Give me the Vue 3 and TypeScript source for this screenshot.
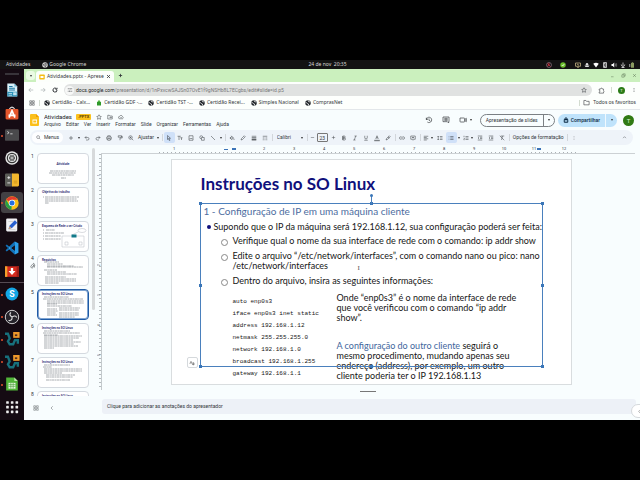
<script setup lang="ts">
import { ref } from 'vue'

interface Tool {
  kind: 'icon' | 'caret' | 'sep'
  icon?: string
  label?: string
  active?: boolean
  slim?: boolean
}

const icons: Record<string, string> = {
  search: 'M15 15l6 6M17 10a7 7 0 1 1-14 0 7 7 0 0 1 14 0z',
  plus: 'M12 4v16M4 12h16',
  minus: 'M4 12h16',
  undo: 'M9 5L4 10l5 5M4 10h11a5 5 0 0 1 0 10H8',
  redo: 'M15 5l5 5-5 5M20 10H9a5 5 0 0 0 0 10h7',
  print: 'M7 8V3h10v5M7 17H3V8h18v9h-4M7 14h10v7H7z',
  paint: 'M5 3h13v6H5zM18 5h3v7h-9v9',
  zoom: 'M15 15l6 6M17 10a7 7 0 1 1-14 0 7 7 0 0 1 14 0zM10 7v6M7 10h6',
  cursor: 'M6 2l12 11h-6l4 8-3 1-4-8-3 4z',
  text: 'M2 5h13M8 5v15M13 11h9M18 11v9',
  image: 'M4 3h16v18H4zM6 17l4-5 3 3 2-2 4 4',
  shape: 'M15 9a6 6 0 1 0-6 6M10 10h11v11H10z',
  line: 'M4 4l16 16',
  fill: 'M9 3l9 9-7 7-7-7 7-7M3 12h14M20 15v5',
  pen: 'M4 20l2-6L17 3l4 4L10 18z',
  weight: 'M3 5h18M3 11h18M3 12h18M3 18h18M3 19h18M3 20h18',
  dash: 'M3 5h18M3 12h7M14 12h7M3 19h4M10 19h4M17 19h4',
  bold: 'M7 4h6a4 4 0 0 1 0 8H7zM7 12h7a4 4 0 0 1 0 8H7zM8 4v16',
  italic: 'M10 4h9M5 20h9M15 4L9 20',
  underline: 'M7 3v8a5 5 0 0 0 10 0V3M5 21h14',
  color: 'M7 16l5-13 5 13M9 11h6M1 21h22M1 23h22',
  marker: 'M4 20l3-7L17 3l4 4-10 10zM12 8l5 5',
  link: 'M10 7H7a5 5 0 0 0 0 10h3M14 7h3a5 5 0 0 1 0 10h-3M8 12h8',
  comment: 'M3 4h18v13h-6l-3 4-3-4H3zM12 7v7M8 10h8',
  align: 'M3 5h18M3 10h12M3 15h18M3 20h12',
  spacing: 'M5 4v16M2 7l3-3 3 3M2 17l3 3 3-3M12 6h10M12 12h10M12 18h10',
  bullets: 'M3 6h2M3 12h2M3 18h2M9 6h13M9 12h13M9 18h13',
  numbers: 'M4 3v6M3 14h3l-3 5h3M10 6h12M10 12h12M10 18h12',
  outdent: 'M3 4h18M12 9h9M12 14h9M3 20h18M8 9l-4 3 4 3',
  indent: 'M3 4h18M12 9h9M12 14h9M3 20h18M4 9l4 3-4 3',
  clear: 'M7 4h14M14 4l-4 16M3 3l18 18',
  more: 'M12 4v2M12 11v2M12 18v2',
  up: 'M5 15l7-7 7 7',
  left: 'M15 5l-7 7 7 7',
  back: 'M21 12H4M11 4l-8 8 8 8',
  forward: 'M3 12h17M13 4l8 8-8 8',
  reload: 'M20 12a8 8 0 1 1-3-6M20 3v6h-6',
  tune: 'M3 7h7M16 7h5M3 17h4M13 17h8M13 4v6M10 14v6',
  star: 'M12 3l3 6 6 1-4 4 1 7-6-3-6 3 1-7-4-4 6-1z',
  move: 'M3 5h6l2 3h10v12H3zM10 14h7M14 11l3 3-3 3',
  cloud: 'M7 19a5 5 0 0 1 0-10 6 6 0 0 1 11 1 5 5 0 0 1 0 9zM9 14l2 2 4-4',
  history: 'M4 12a8 8 0 1 1 3 6M4 5v5h5M12 7v6l4 2',
  chat: 'M3 3h18v14h-1v4l-4-4H3zM7 7h10M7 10h10M7 13h10',
  video: 'M3 6h12a2 2 0 0 1 2 2v8a2 2 0 0 1-2 2H5a2 2 0 0 1-2-2zM17 11l5-4v10l-5-4',
  lock: 'M5 10h14v11H5zM8 10V7a4 4 0 0 1 8 0v3M12 14v3',
  puzzle: 'M4 7h5a3 3 0 0 1 6 0h4v5a3 3 0 0 1 0 5v4H4v-4a3 3 0 0 0 0-6z',
  folder: 'M3 5h7l2 3h9v12H3z',
  grid: 'M3 3h7v7H3zM14 3h7v7h-7zM3 14h7v7H3zM14 14h7v7h-7z',
  clip: 'M9 16l8-9a3 3 0 0 0-5-4L4 12a5 5 0 0 0 8 6l8-9M15 6l3 12',
  min: 'M5 18h12',
  restore: 'M4 9h11v11H4zM9 9V4h11v11h-5',
  close: 'M5 5l14 14M19 5L5 19',
}

const icon = (name: string, label: string, slim = false, active = false): Tool => ({ kind: 'icon', icon: name, label, slim, active })
const caret = (): Tool => ({ kind: 'caret' })
const sep = (): Tool => ({ kind: 'sep' })

const toolsStart: Tool[] = [
  icon('plus', 'Novo slide'), caret(), icon('undo', 'Desfazer'), icon('redo', 'Refazer'),
  icon('print', 'Imprimir'), icon('paint', 'Pintar formatação'), icon('zoom', 'Zoom'),
]
const toolsDraw: Tool[] = [
  sep(), icon('cursor', 'Selecionar', false, true), icon('text', 'Caixa de texto'), icon('image', 'Imagem'),
  icon('shape', 'Forma'), icon('line', 'Linha'), caret(), sep(), icon('fill', 'Cor de preenchimento'),
  icon('pen', 'Cor da borda'), icon('weight', 'Espessura da borda'), icon('dash', 'Traço da borda'), sep(),
]
const toolsText: Tool[] = [
  icon('bold', 'Negrito'), icon('italic', 'Itálico'), icon('underline', 'Sublinhado'), icon('color', 'Cor do texto'),
  icon('marker', 'Cor de destaque'), sep(), icon('link', 'Inserir link'), icon('comment', 'Adicionar comentário'), sep(),
  icon('align', 'Alinhar', true), caret(), icon('spacing', 'Espaçamento'), icon('bullets', 'Lista com marcadores', false, true),
  caret(), icon('numbers', 'Lista numerada', true), caret(), icon('outdent', 'Diminuir recuo'),
  icon('indent', 'Aumentar recuo'), icon('clear', 'Limpar formatação'), sep(),
]

const bookmarks = [
  { text: 'Certidão - Calx...', green: false },
  { text: 'Certidão GDF -...', green: true },
  { text: 'Certidão TST -...', green: false },
  { text: 'Certidão Recei...', green: false },
  { text: 'Simples Nacional', green: false },
  { text: 'ComprasNet', green: false },
]
const menus = ['Arquivo', 'Editar', 'Ver', 'Inserir', 'Formatar', 'Slide', 'Organizar', 'Ferramentas', 'Ajuda']

/* Each bar is [x, y, width] on a 50 by 30 slide. */
interface Thumb { n: number; title: string; center?: boolean; bars: number[][]; diagram?: boolean }
const thumbs: Thumb[] = [
  { n: 1, title: 'Atividade', center: true, bars: [[12, 17, 26], [11, 19, 27], [14, 21, 22], [23, 24, 5]] },
  { n: 2, title: 'Objetivo do trabalho', bars: [[5, 9, 1], [7, 9, 34], [7, 11, 32], [7, 13, 33], [7, 15, 4]] },
  { n: 3, title: 'Esquema de Rede a ser Criado', diagram: true, bars: [[5, 8, 1], [8, 8, 9], [5, 11, 1], [7, 11, 19], [5, 14, 1], [7, 14, 16], [5, 17, 1], [7, 17, 16]] },
  { n: 4, title: 'Requisitos', bars: [[6, 6, 15], [9, 8, 16], [9, 10, 27], [9, 11, 36], [6, 14, 13], [9, 16, 19], [9, 18, 30], [7, 21, 21], [7, 23, 31], [7, 25, 31], [7, 27, 14]] },
  { n: 5, title: 'Instruções no SO Linux', bars: [[6, 7, 25], [5, 9, 40], [9, 11, 37], [9, 13, 37], [9, 14, 10], [9, 16, 25], [9, 19, 10], [9, 21, 11], [9, 23, 9], [9, 25, 10], [21, 18, 21], [21, 20, 20], [21, 23, 20], [21, 25, 20], [21, 27, 16]] },
  { n: 6, title: 'Instruções no SO Linux', bars: [[6, 7, 26], [5, 9, 37], [6, 11, 14], [6, 12, 38], [6, 14, 35], [6, 16, 29], [6, 18, 37], [6, 20, 30], [6, 22, 34], [6, 24, 10]] },
  { n: 7, title: 'Instruções no SO Linux', bars: [[6, 7, 26], [5, 9, 9], [6, 11, 38], [6, 13, 38], [6, 15, 18], [8, 17, 29], [8, 19, 27], [8, 22, 24]] },
  { n: 8, title: 'Instruções no SO Linux', bars: [[6, 7, 26]] },
]

const config = [
  'auto enp0s3', 'iface enp0s3 inet static', 'address 192.168.1.12', 'netmask 255.255.255.0',
  'network 192.168.1.0', 'broadcast 192.168.1.255', 'gateway 192.168.1.1',
]
const rulerX = ['1', '', '', '2', '3', '4', '5', '6', '7', '8', '9', '10', '11', '12']
const rulerY = ['1', '', '1', '2', '3', '4', '5']

const selected = ref(5)
const title = ref('Atividades')
const url = ref('/presentation/d/1nPxvcwSAJSn07OvE1f9gNSHb8L7ECgbs/edit#slide=id.p5')
const font = ref('Calibri')
const size = ref('23')
const notes = ref('')
</script>

<template>
  <div class="screen">
    <header class="topbar">
      <div class="top-left">
        <span>Atividades</span>
        <span class="app-name"><svg class="art" viewBox="0 0 24 24"><circle cx="12" cy="12" r="11" fill="#ddd" /><circle cx="12" cy="12" r="5" fill="#ddd" stroke="#222" stroke-width="2" /><path d="M12 7h10M8 14L3 6M16 14l-4 9" stroke="#222" stroke-width="2" /></svg>Google Chrome</span>
      </div>
      <time>24 de nov&nbsp; 20:35</time>
      <div class="tray">
        <svg class="art tray-a" viewBox="0 0 24 24" fill="none" stroke="#b9a" stroke-width="2"><circle cx="12" cy="12" r="10" /><path d="M6 6l12 12M12 3v9l-7 5" stroke="#d34" stroke-width="3" /></svg>
        <svg class="art tray-b" viewBox="0 0 24 24"><circle cx="12" cy="12" r="11" fill="#6cc02c" /><path d="M7 12l4 4 6-8" stroke="#fff" stroke-width="3" fill="none" /></svg>
        <svg class="art" viewBox="0 0 24 24" fill="none" stroke="#cb8" stroke-width="3"><path d="M2 4h20v13H2zM8 21h8M8 8l8 5" /></svg>
        <svg class="art" viewBox="0 0 24 24" fill="#ddd"><circle cx="12" cy="9" r="5" /><path d="M2 14h20l-4 6H6z" /></svg>
        <svg class="art" viewBox="0 0 24 24" fill="#fff"><path d="M1 7q11-8 22 0L12 22z" /></svg>
        <svg class="art" viewBox="0 0 24 24"><path d="M5 1h14v22H5z" fill="#eee" /><path d="M8 8l8 8-4 4V4l4 4-8 8" stroke="#222" stroke-width="2" fill="none" /></svg>
        <svg class="art" viewBox="0 0 24 24"><path d="M2 8h5l6-6v20l-6-6H2z" fill="#fff" /><path d="M17 7q4 5 0 10M20 4q6 8 0 16" stroke="#aaa" stroke-width="2" fill="none" /></svg>
        <svg class="art" viewBox="0 0 24 24" fill="none" stroke="#eee" stroke-width="3"><path d="M12 2v11M5 10q0 7 7 7t7-7M12 17v6M6 22h12" /></svg>
        <svg class="art" viewBox="0 0 24 24"><path d="M8 4h12v19H8zM11 1h6v3h-6z" fill="#8a9a60" /><path d="M3 8v12" stroke="#ddd" stroke-width="3" /></svg>
      </div>
    </header>

    <div class="desktop">
      <nav class="dock" aria-label="Aplicativos">
        <i class="dock-edge"></i>
        <div class="dock-group pinned">
          <button class="app" aria-label="Writer"><svg viewBox="0 0 24 24"><path d="M4 1h12l5 5v17H4z" fill="#d8f1fa" /><path d="M16 1v5h5z" fill="#6fb6d2" /><path d="M4 15h17v8H4z" fill="#2a90b8" /><path d="M7 9h10M7 12h10M7 6h6" stroke="#1675a0" stroke-width="2" /><path d="M6 18h6M6 21h6" stroke="#fff" stroke-width="1" /><path d="M14 16h6v5h-6z" fill="#bfe3ef" /></svg></button>
          <button class="app" aria-label="Software"><svg viewBox="0 0 24 24"><path d="M7 6q5-8 10 0" fill="none" stroke="#ddd" stroke-width="2" /><rect x="1" y="5" width="22" height="18" rx="2" fill="#e4562c" /><path d="M7 20l5-12 5 12M6 16h12" fill="none" stroke="#fff" stroke-width="3" /></svg></button>
          <button class="app run" aria-label="Terminal"><svg viewBox="0 0 24 24"><rect x="0" y="2" width="24" height="20" rx="2" fill="#4a4a4c" /><path d="M4 6l3 2-3 2M9 10h4" fill="none" stroke="#ddd" stroke-width="1.5" /></svg></button>
          <button class="app" aria-label="Configurações"><svg viewBox="0 0 24 24"><circle cx="12" cy="12" r="11.500" fill="#e4e4e4" /><circle cx="12" cy="12" r="8" fill="none" stroke="#333" stroke-width="2" /><circle cx="12" cy="12" r="5" fill="#444" /><path d="M12 6v12M7 9l10 6M7 15l10-6" stroke="#eee" stroke-width="1" /></svg></button>
          <button class="app" aria-label="Calculadora"><svg viewBox="0 0 24 24"><rect x="0" y="1" width="14" height="22" rx="2" fill="#5c5d58" /><path d="M12 1h10q2 0 2 2v18q0 2-2 2H12z" fill="#f3b72e" /><path d="M4 8h5M6.500 5.500v5M4 17h5" stroke="#eee" stroke-width="1.500" /><path d="M15 14h6M15 17h6" stroke="#bb8510" stroke-width="1" /></svg></button>
          <button class="app run current" aria-label="Google Chrome"><svg viewBox="0 0 24 24"><circle cx="12" cy="12" r="11.500" fill="#fbc116" /><path d="M12 12L2 6.500A11.500 11.500 0 0 1 22 6.500H12z" fill="#e33b2e" /><path d="M12 12l-1 11.500A11.500 11.500 0 0 1 2 6.500L7 15z" fill="#25a148" /><circle cx="12" cy="12" r="5.500" fill="#fff" /><circle cx="12" cy="12" r="4.300" fill="#2470e0" /></svg></button>
          <button class="app" aria-label="Editor de texto"><svg viewBox="0 0 24 24"><rect x="2" y="1" width="19" height="22" rx="2" fill="#f1f1f4" /><path d="M6 6h9M6 20h12" stroke="#bbb" stroke-width="1" /><path d="M6 19l2-6 9-9 4 4-9 9z" fill="#2860d0" /><path d="M6 19l2-5 3 3z" fill="#e9a860" /></svg></button>
          <button class="app" aria-label="Visual Studio Code"><svg viewBox="0 0 24 24"><path d="M17 1l6 3v16l-6 3L5 12z" fill="#2b9fe8" /><path d="M17 7v10l-7-5z" fill="#16101a" /><path d="M1 8l2-2 14 12v5zM1 16l2 2L17 7V1z" fill="#1272b9" /></svg></button>
          <button class="app" aria-label="Downloads"><svg viewBox="0 0 24 24"><path d="M0 4h24v18H0z" fill="#d52b1e" /><path d="M0 4h4v18H0z" fill="#f4a12c" /><path d="M20 4h4v18h-4z" fill="#9c1d16" /><path d="M10 7h4v5h4l-6 7-6-7h4z" fill="#fff" /></svg></button>
        </div>
        <div class="dock-group running">
          <button class="app run" aria-label="Skype"><svg viewBox="0 0 24 24"><circle cx="12" cy="12" r="11" fill="#14a5e4" /><text x="12" y="17" class="skype">S</text></svg></button>
          <button class="app run" aria-label="OBS Studio"><svg viewBox="0 0 24 24"><circle cx="12" cy="12" r="11.500" fill="#25232a" stroke="#e8e8e8" stroke-width="1.500" /><path d="M12 12q-6-3-2-8M12 12q6-4 8 1M12 12q1 7-6 6" fill="none" stroke="#ddd" stroke-width="2" /></svg></button>
          <button v-for="n in 2" :key="n" class="app run" :aria-label="'Máquina virtual ' + n"><svg viewBox="0 0 24 24"><path d="M0 3h5l3 8-3 5 3 5h6l3-7h5v6" fill="none" stroke="#17707c" stroke-width="4" /><rect x="14" y="0" width="11" height="10" fill="#ed982b" /><path d="M17 4h4v3h-4z" fill="#4d2d20" /></svg></button>
          <button class="app run" aria-label="Calc"><svg viewBox="0 0 24 24"><path d="M2 1h14l6 6v16H2z" fill="#51b438" /><path d="M16 1v6h6z" fill="#bfe7b0" /><path d="M6 10h12v10H6z" fill="#e9f8e3" /><path d="M6 13h12M6 16h12M10 10v10M14 10v10" stroke="#3e9a2c" stroke-width="1" /></svg></button>
          <button class="app" aria-label="Mostrar aplicativos"><svg viewBox="0 0 24 24" fill="#eee"><rect v-for="n in 9" :key="n" :x="2 + ((n - 1) % 3) * 8" :y="2 + Math.floor((n - 1) / 3) * 8" width="4.500" height="4.500" rx="1" /></svg></button>
        </div>
      </nav>

      <main class="browser">
        <div class="tabs">
          <button class="tab-search" aria-label="Pesquisar guias"><i class="caret"></i></button>
          <div class="tab">
            <svg class="art" viewBox="0 0 24 24"><rect x="1" y="2" width="22" height="20" rx="3" fill="#f5bc14" /><path d="M6 8h12v8H6z" fill="#fff" /></svg>
            <span class="tab-title">Atividades.pptx - Aprese</span>
            <button class="ib" aria-label="Fechar guia"><svg class="i5 bold" viewBox="0 0 24 24"><path :d="icons.close" /></svg></button>
          </div>
          <button class="ib new-tab" aria-label="Nova guia"><svg class="i5 bold" viewBox="0 0 24 24"><path :d="icons.plus" /></svg></button>
          <div class="win">
            <button v-for="w in ['min', 'restore', 'close']" :key="w" class="ib" :aria-label="w"><svg class="i5" viewBox="0 0 24 24"><path :d="icons[w]" /></svg></button>
          </div>
        </div>

        <div class="address">
          <button class="ib faded" aria-label="Voltar"><svg class="i6" viewBox="0 0 24 24"><path :d="icons.back" /></svg></button>
          <button class="ib faded" aria-label="Avançar"><svg class="i6" viewBox="0 0 24 24"><path :d="icons.forward" /></svg></button>
          <button class="ib" aria-label="Recarregar"><svg class="i6 bold" viewBox="0 0 24 24"><path :d="icons.reload" /></svg></button>
          <div class="omnibox">
            <span class="site"><svg class="i6" viewBox="0 0 24 24"><path :d="icons.tune" /></svg></span>
            <label for="url">docs.google.com</label>
            <input id="url" v-model="url" />
            <button class="ib" aria-label="Favoritar"><svg class="i6" viewBox="0 0 24 24"><path :d="icons.star" /></svg></button>
          </div>
          <button class="ib" aria-label="Extensões"><svg class="i7" viewBox="0 0 24 24"><path :d="icons.puzzle" /></svg></button>
          <i class="rule"></i>
          <button class="profile" aria-label="Perfil">T</button>
          <button class="ib" aria-label="Menu"><svg class="i6 bold" viewBox="0 0 24 24"><path :d="icons.more" /></svg></button>
        </div>

        <div class="bookmarks">
          <button class="ib" aria-label="Grupos de guias"><svg class="i6" viewBox="0 0 24 24"><path :d="icons.grid" /></svg></button>
          <i class="rule"></i>
          <a v-for="b in bookmarks" :key="b.text" href="#">
            <svg v-if="b.green" class="art" viewBox="0 0 24 24"><path d="M4 7h16v15H4z" fill="#2f9a2a" /><path d="M8 2h8v6H8z" fill="#4fb53e" /></svg>
            <svg v-else class="art" viewBox="0 0 24 24"><circle cx="12" cy="12" r="11" fill="#22262b" /><path d="M2 11q7-1 8 3t4 2v6M13 2q-2 6 8 6" stroke="#fff" stroke-width="3" fill="none" /></svg>{{ b.text }}
          </a>
          <a class="all" href="#"><i class="rule"></i><svg class="i7" viewBox="0 0 24 24"><path :d="icons.folder" /></svg>Todos os favoritos</a>
        </div>

        <div class="doc-head">
          <svg class="logo" viewBox="0 0 18 24"><path d="M2 0h10l6 6v16q0 2-2 2H2q-2 0-2-2V2q0-2 2-2z" fill="#fbc01b" /><path d="M12 0v6h6z" fill="#f09d00" /><path d="M5 11h9v8H5z" fill="#fff" /><path d="M6.500 13h6v4h-6z" fill="#fbc01b" /></svg>
          <div class="doc-info">
            <div class="doc-title">
              <input v-model="title" aria-label="Título" />
              <span class="badge">.PPTX</span>
              <button v-for="[n, l] in [['star', 'Com estrela'], ['move', 'Mover'], ['cloud', 'Status']]" :key="n" class="ib" :aria-label="l"><svg class="i6" viewBox="0 0 24 24"><path :d="icons[n]" /></svg></button>
            </div>
            <div class="menus"><button v-for="m in menus" :key="m">{{ m }}</button></div>
          </div>
          <div class="doc-actions">
            <button class="ib" aria-label="Histórico"><svg class="i8" viewBox="0 0 24 24"><path :d="icons.history" /></svg></button>
            <button class="ib" aria-label="Comentários"><svg class="i8" viewBox="0 0 24 24"><path :d="icons.chat" /></svg></button>
            <button class="ib meet" aria-label="Reunião"><svg class="i8" viewBox="0 0 24 24"><path :d="icons.video" /></svg><i class="caret"></i></button>
            <div class="present"><button>Apresentação de slides</button><button class="drop" aria-label="Opções de apresentação"><i class="caret"></i></button></div>
            <div class="share"><button><svg class="i6 bold" viewBox="0 0 24 24"><path :d="icons.lock" /></svg>Compartilhar</button><button class="drop" aria-label="Opções de compartilhamento"><i class="caret"></i></button></div>
            <button class="avatar" aria-label="Conta">T</button>
          </div>
        </div>

        <div class="toolbar">
          <button class="menu-search"><svg class="i5" viewBox="0 0 24 24"><path :d="icons.search" /></svg>Menus</button>
          <template v-for="(t, k) in toolsStart" :key="'a' + k">
            <i v-if="t.kind === 'caret'" class="cell-caret"><i class="caret"></i></i>
            <button v-else class="cell" :aria-label="t.label"><svg class="i6" viewBox="0 0 24 24"><path :d="icons[t.icon!]" /></svg></button>
          </template>
          <button class="fit">Ajustar<i class="caret"></i></button>
          <template v-for="(t, k) in toolsDraw" :key="'b' + k">
            <i v-if="t.kind === 'sep'" class="cell-sep"></i>
            <i v-else-if="t.kind === 'caret'" class="cell-caret"><i class="caret"></i></i>
            <button v-else class="cell" :class="{ active: t.active }" :aria-label="t.label"><svg class="i6" viewBox="0 0 24 24"><path :d="icons[t.icon!]" /></svg></button>
          </template>
          <div class="font"><select v-model="font" aria-label="Fonte"><option>Calibri</option></select><i class="caret"></i></div>
          <i class="cell-sep"></i>
          <button class="cell slim" aria-label="Diminuir fonte"><svg class="i5" viewBox="0 0 24 24"><path :d="icons.minus" /></svg></button>
          <input v-model="size" class="size" aria-label="Tamanho da fonte" />
          <button class="cell" aria-label="Aumentar fonte"><svg class="i5" viewBox="0 0 24 24"><path :d="icons.plus" /></svg></button>
          <template v-for="(t, k) in toolsText" :key="'c' + k">
            <i v-if="t.kind === 'sep'" class="cell-sep"></i>
            <i v-else-if="t.kind === 'caret'" class="cell-caret"><i class="caret"></i></i>
            <button v-else class="cell" :class="{ active: t.active, slim: t.slim }" :aria-label="t.label"><svg class="i6" viewBox="0 0 24 24"><path :d="icons[t.icon!]" /></svg></button>
          </template>
          <button class="format">Opções de formatação</button>
          <i class="cell-sep"></i>
          <button class="cell" aria-label="Mais"><svg class="i6" viewBox="0 0 24 24"><path :d="icons.more" /></svg></button>
          <button class="cell collapse" aria-label="Ocultar menus"><svg class="i5" viewBox="0 0 24 24"><path :d="icons.up" /></svg></button>
        </div>

        <div class="workspace">
          <aside class="side">
            <div class="film">
              <ol>
                <li v-for="t in thumbs" :key="t.n">
                  <span class="num">{{ t.n }}<svg v-if="t.n === 4" class="i6" viewBox="0 0 24 24"><path :d="icons.clip" /></svg></span>
                  <button class="thumb" :class="{ selected: t.n === selected }" :aria-label="'Slide ' + t.n" @click="selected = t.n">
                    <svg viewBox="0 0 50 30">
                      <text :x="t.center ? 25 : 4" :y="t.center ? 11 : 5" :class="['thumb-title', { center: t.center }]">{{ t.title }}</text>
                      <path v-for="(b, k) in t.bars" :key="k" class="bar" :d="`M${b[0]} ${b[1]}h${b[2]}`" />
                      <g v-if="t.diagram" fill="#fff" stroke="#b5b8c0" stroke-width="0.500">
                        <path d="M24 14h22v11H24zM34 13l8-4" /><ellipse cx="44" cy="8.500" rx="4" ry="2" />
                        <rect x="33.500" y="12.500" width="5" height="3" fill="#127a8a" stroke="none" />
                        <path d="M27 20h3v3h-3zM41 20h3v3h-3z" />
                      </g>
                    </svg>
                  </button>
                </li>
              </ol>
              <i class="scroll"></i>
            </div>
            <div class="side-foot">
              <button class="ib" aria-label="Visualização em grade"><svg class="i6" viewBox="0 0 24 24"><path :d="icons.grid" /></svg></button>
              <button class="ib" aria-label="Ocultar miniaturas"><svg class="i6" viewBox="0 0 24 24"><path :d="icons.left" /></svg></button>
            </div>
          </aside>

          <section class="stage">
            <div class="ruler-x">
              <div class="scale-x"><span v-for="(r, k) in rulerX" :key="k">{{ r }}<i v-if="k === 2" class="markers"><b></b><b class="down"></b></i><i v-if="k === 12" class="markers end"><b class="down"></b></i></span></div>
            </div>
            <div class="stage-body">
              <div class="ruler-y"><span v-for="(r, k) in rulerY" :key="k">{{ r }}</span></div>
              <div class="canvas">
                <article class="slide">
                  <h1>Instruções no SO Linux</h1>
                  <div class="body-box">
                    <h2>1 - Configuração de IP em uma máquina cliente</h2>
                    <p class="lead">Supondo que o IP da máquina será 192.168.1.12, sua configuração poderá ser feita:</p>
                    <ul>
                      <li>Verifique qual o nome da sua interface de rede com o comando: ip addr show</li>
                      <li>Edite o arquivo “/etc/network/interfaces”, com o comando nano ou pico: nano<br>/etc/network/interfaces</li>
                      <li>Dentro do arquivo, insira as seguintes informações:</li>
                    </ul>
                    <div class="columns">
                      <div class="code"><code v-for="c in config" :key="c">{{ c }}</code></div>
                      <div class="aside-text">
                        <p>Onde “enp0s3” é o nome da interface de rede<br>que você verificou com o comando “ip addr<br>show”.</p>
                        <p><em>A configuração do outro cliente</em> seguirá o<br>mesmo procedimento, mudando apenas seu<br>endereço (address), por exemplo, um outro<br>cliente poderia ter o IP 192.168.1.13</p>
                      </div>
                    </div>
                    <div class="selection">
                      <i class="h nw"></i><i class="h n"></i><i class="h ne"></i><i class="h w"></i><i class="h e"></i>
                      <i class="h sw"></i><i class="h s"></i><i class="h se"></i><i class="stem"></i><i class="h rot"></i>
                    </div>
                    <span class="pointer">I</span>
                  </div>
                  <button class="autofit" aria-label="Ajuste automático"><svg class="i6" viewBox="0 0 24 24"><path d="M3 15L8 5l5 10M5 12h6M13 17h8M14 11q6-3 6 2v6q-6 2-6-2t6-2" /></svg></button>
                </article>
              </div>
            </div>
            <div class="grip"></div>
            <div class="notes">
              <textarea v-model="notes" rows="1" placeholder="Clique para adicionar as anotações do apresentador" aria-label="Anotações do apresentador"></textarea>
              <button class="side-toggle" aria-label="Mostrar painel lateral"><svg class="i5" viewBox="0 0 24 24"><path :d="icons.left" /></svg></button>
            </div>
          </section>
        </div>
      </main>
    </div>
  </div>
</template>

<style>
body { margin: 0; background: #000; }
</style>

<style scoped>
* { box-sizing: border-box; }
.screen { min-height: 100vh; padding: 60px 0; background: #000; display: flex; flex-direction: column; font-family: Roboto, "Liberation Sans", sans-serif; font-size: 5px; line-height: 7px; color: #33363a; overflow: hidden; }
button, input, select, textarea { font: inherit; color: inherit; background: none; border: 0; padding: 0; margin: 0; outline: 0; }
button { display: flex; align-items: center; justify-content: center; white-space: nowrap; cursor: pointer; }
a { color: inherit; text-decoration: none; }
svg { display: block; flex: none; overflow: visible; }
.art { width: 6px; height: 6px; }
.i5, .i6, .i7, .i8 { fill: none; stroke: currentColor; stroke-width: 2; }
.i5 { width: 5px; height: 5px; }
.i6 { width: 6px; height: 6px; }
.i7 { width: 7px; height: 7px; }
.i8 { width: 8px; height: 8px; }
.bold { stroke-width: 4; }
.caret { display: block; width: 0; border: 1px solid transparent; border-top: 2px solid #333; border-bottom: 0; }
.ib { flex: none; }

.topbar { display: grid; grid-template-columns: 1fr auto 1fr; align-items: center; height: 9px; padding: 0 5px 0 6px; background: #131313; color: #d8d8d8; font-family: "Noto Sans", sans-serif; }
.top-left { display: flex; gap: 12px; }
.app-name { display: flex; align-items: center; gap: 1px; }
.tray { display: flex; justify-content: flex-end; gap: 3px; }
.tray-a { margin-right: 5px; }
.tray-b { margin-right: 6px; }
time { padding-left: 14px; }

.desktop { flex: 1; display: flex; min-height: 351px; }
.dock { flex: none; width: 24px; display: flex; flex-direction: column; align-items: stretch; background: #150b13; }
.dock-edge { height: 2px; width: 14px; margin: 4px auto 4px; background: #38343a; }
.dock-group { display: flex; flex-direction: column; justify-content: space-around; align-items: center; }
.pinned { flex: 9; border-bottom: 1px solid #554b53; }
.running { flex: 6; padding-bottom: 2px; }
.app { position: relative; width: 22px; height: 21px; border-radius: 3px; }
.app svg { width: 14px; height: 14px; }
.app.current { background: #434044; }
.app.run::before { content: ""; position: absolute; left: 0; top: 10px; width: 2px; height: 2px; border-radius: 1px; background: #e4502c; }
.skype { font: bold 15px Roboto, sans-serif; fill: #fff; text-anchor: middle; }

.browser { flex: 1; min-width: 0; display: flex; flex-direction: column; background: #f8fdfe; }
.tabs { display: flex; align-items: center; height: 13px; padding: 0 3px 0 2px; background: #cbf0be; font-family: "Noto Sans", sans-serif; }
.tab-search { width: 9px; height: 9px; border-radius: 3px; background: #eafbe4; }
.tab { display: flex; align-items: center; gap: 2px; align-self: flex-end; height: 11px; width: 78px; margin-left: 1px; padding: 0 3px; border-radius: 3px 3px 0 0; background: #fcfffb; }
.tab-title { flex: 1; white-space: nowrap; }
.new-tab { margin-left: 4px; }
.win { margin-left: auto; display: flex; gap: 6px; color: #4b6144; }
.address { display: flex; align-items: center; gap: 6px; height: 16px; padding: 0 3px 0 4px; background: #fdfffd; }
.faded { color: #8b9095; }
.omnibox { flex: 1; display: flex; align-items: center; height: 12px; padding: 0 5px 0 1px; border-radius: 6px; background: #e0e2e1; }
.site { display: grid; place-items: center; width: 9px; height: 9px; border-radius: 5px; background: #f7f8f7; margin-right: 2px; }
.omnibox label { color: #222; }
.omnibox input { flex: 1; min-width: 0; color: #777; }
.profile { width: 7px; height: 7px; border-radius: 4px; background: #2a7b16; color: #fff; font-size: 4px; }
.rule { flex: none; width: 1px; height: 6px; background: #d3dcd0; }
.bookmarks { display: flex; align-items: center; gap: 4px; height: 12px; padding: 0 4px 2px 5px; background: #fdfffd; border-bottom: 1px solid #e3e7ea; font-family: "Noto Sans", sans-serif; white-space: nowrap; }
.bookmarks a { display: flex; align-items: center; gap: 2px; margin-right: 2px; }
.bookmarks a.all { margin: 0 0 0 auto; gap: 3px; }

.doc-head { display: flex; align-items: center; height: 20px; padding: 0 6px 0 6px; }
.logo { width: 9px; height: 12px; }
.doc-info { margin-left: 5px; display: flex; flex-direction: column; }
.doc-title { display: flex; align-items: center; gap: 5px; height: 8px; }
.doc-title input { width: 28px; height: 8px; font-size: 6px; color: #202124; }
.badge { margin-left: -1px; padding: 0 2px; height: 6px; line-height: 6px; border-radius: 1px; background: #fbc21e; font-size: 4px; font-weight: bold; color: #5c4300; }
.menus { display: flex; gap: 5px; }
.doc-actions { margin-left: auto; display: flex; align-items: center; }
.doc-actions > .ib { margin-right: 9px; }
.meet { gap: 3px; }
.doc-actions > .meet { margin-right: 8px; }
.present, .share { display: flex; align-items: stretch; height: 13px; border-radius: 7px; }
.present { border: 1px solid #7b8084; margin-right: 3px; }
.present button { padding: 0 5px; }
.present .drop { width: 11px; padding: 0; border-left: 1px solid #7b8084; }
.share { background: #bfe3fb; color: #0b2a44; font-weight: 500; margin-right: 6px; }
.share button { gap: 2px; padding: 0 5px; }
.share .drop { width: 12px; padding: 0; border-left: 1px solid #f0f9fe; }
.avatar { width: 11px; height: 11px; border-radius: 6px; background: #2f7a14; color: #d7f0cc; font-size: 6px; }

.toolbar { display: flex; align-items: center; height: 15px; margin: 0 7px 0 6px; padding: 0 3px 0 2px; border-radius: 8px; background: #eef3f9; }
.menu-search { width: 31px; height: 11px; margin-right: 2px; border-radius: 6px; background: #fdfeff; gap: 3px; }
.cell { flex: none; width: 11px; height: 11px; border-radius: 2px; }
.cell.slim { width: 8px; }
.cell.active { background: #cfe0f8; }
.cell-caret { flex: none; display: grid; place-items: center; width: 5px; }
.cell-sep { flex: none; width: 1px; height: 7px; margin: 0 1px; background: #d2d6db; }
.fit { gap: 3px; padding: 0 2px; }
.font { flex: none; display: flex; align-items: center; width: 32px; padding: 0 3px; }
.font select { flex: 1; appearance: none; }
.size { flex: none; width: 11px; height: 9px; border: 1px solid #777; border-radius: 1px; text-align: center; }
.format { padding: 0 2px; }
.collapse { margin-left: auto; }

.workspace { flex: 1; display: flex; min-height: 0; }
.side { flex: none; width: 72px; display: flex; flex-direction: column; }
.film { flex: 1; contain: size; display: flex; justify-content: space-between; margin-top: 3px; overflow: hidden; }
.film ol { list-style: none; margin: 0; padding: 5px 0 0 6px; display: flex; flex-direction: column; gap: 3px; }
.film li { display: flex; gap: 2px; }
.num { width: 5px; display: flex; flex-direction: column; align-items: center; gap: 1px; }
.thumb { width: 52px; height: 31px; border: 1px solid #d5dae0; border-radius: 4px; background: #fff; overflow: hidden; }
.thumb svg { width: 50px; height: 30px; }
.thumb.selected { border-color: #1f5aa5; box-shadow: inset 0 0 0 1px #7fa4d1; }
.thumb-title { font: bold 3px Lato, sans-serif; fill: #1c1a6e; }
.thumb-title.center { text-anchor: middle; }
.bar { stroke: #70757c; stroke-width: 0.6; stroke-dasharray: 3 0.4 1.5 0.4; }
.scroll { width: 3px; height: 162px; border-radius: 2px; background: #d7dadb; margin-right: 1px; }
.side-foot { flex: none; display: flex; align-items: center; gap: 10px; height: 24px; padding-left: 9px; color: #5c6064; }

.stage { flex: 1; min-width: 0; display: flex; flex-direction: column; padding-bottom: 6px; }
.ruler-x { display: flex; justify-content: center; height: 9px; margin: 0 5px 0 5px; border-bottom: 1px solid #ccd1d4; }
.scale-x { display: flex; width: 418px; margin-top: auto; height: 7px; background: repeating-linear-gradient(90deg, #aab0b4 0 1px, transparent 1px 4px) bottom / 100% 1px no-repeat; }
.scale-x span { position: relative; flex: none; width: 30px; font-size: 4px; line-height: 6px; text-align: center; }
.markers { position: absolute; top: 2px; left: 5px; display: flex; align-items: center; gap: 4px; }
.markers b { width: 4px; height: 1px; background: #3b73b8; }
.markers b.down { height: 2px; }
.markers.end { left: 18px; }
.stage-body { flex: 1; display: flex; }
.ruler-y { flex: none; width: 6px; height: 236px; padding-top: 6px; border-right: 1px solid #c3c9cc; background: repeating-linear-gradient(180deg, #b4babd 0 1px, transparent 1px 4px) right / 2px 100% no-repeat; }
.ruler-y span { display: grid; place-items: center; width: 4px; height: 30px; font-size: 3px; writing-mode: vertical-rl; transform: rotate(180deg); }
.canvas { flex: 1; display: flex; justify-content: center; padding-top: 5px; }
.slide { position: relative; width: 401px; height: 226px; border: 1px solid #d9dddf; background: #fff; color: #161616; font-family: Lato, sans-serif; white-space: nowrap; }
.slide h1 { margin: 13px 0 0 29px; font-size: 17px; line-height: 22px; font-weight: bold; color: #10107c; }
.body-box { position: absolute; left: 28px; top: 43px; width: 343px; height: 164px; padding: 0 0 0 4px; font-size: 9px; line-height: 10px; }
.slide h2 { margin: 2px 0 0; font-size: 10px; line-height: 12px; font-weight: normal; color: #4d6da0; }
.lead { position: relative; margin: 5px 0 0 10px; }
.lead::before { content: ""; position: absolute; left: -7px; top: 3px; width: 4px; height: 4px; border-radius: 2px; background: #10107c; }
.slide ul { list-style: none; margin: 4px 0 0 29px; padding: 0; display: flex; flex-direction: column; gap: 5px; }
.slide ul li { position: relative; }
.slide ul li::before { content: ""; position: absolute; left: -12px; top: 3px; width: 5px; height: 5px; border: 1px solid #888; border-radius: 50%; }
.columns { display: flex; margin: 7px 0 0 29px; }
.code { width: 104px; padding-top: 3px; display: flex; flex-direction: column; }
.code code { font: 6px/12px "Liberation Mono", monospace; }
.aside-text p { margin: 0 0 18px; }
.aside-text em { font-style: normal; color: #41669d; }
.selection { position: absolute; inset: 0; border: 1px solid #4a80bd; }
.h { position: absolute; width: 3px; height: 3px; background: #3a76b8; }
.nw, .n, .ne { top: -2px; }
.sw, .s, .se { bottom: -2px; }
.w, .e { top: 80px; }
.nw, .w, .sw { left: -2px; }
.ne, .e, .se { right: -2px; }
.n, .s, .rot { left: 169px; }
.rot { top: -10px; border-radius: 2px; }
.stem { position: absolute; left: 170px; top: -8px; width: 1px; height: 8px; background: #4a80bd; }
.pointer { position: absolute; left: 158px; top: 61px; font: 7px "Liberation Serif", serif; color: #555; }
.autofit { position: absolute; left: 15px; bottom: 16px; width: 11px; height: 11px; border: 1px solid #d5d9dc; border-radius: 2px; background: #fff; color: #555; }
.grip { align-self: center; width: 16px; height: 1px; margin-bottom: 7px; background: #777; }
.notes { position: relative; display: flex; margin: 0 4px 0 6px; height: 15px; border-radius: 3px; background: #edf1f7; }
.notes textarea { flex: 1; height: 15px; padding: 4px 5px; resize: none; overflow: hidden; }
.notes textarea::placeholder { color: #33363a; opacity: 1; }
.side-toggle { position: absolute; right: -11px; top: 5px; width: 16px; height: 14px; border: 1px solid #d5d9dc; border-radius: 7px; background: #fff; color: #444; }
</style>
